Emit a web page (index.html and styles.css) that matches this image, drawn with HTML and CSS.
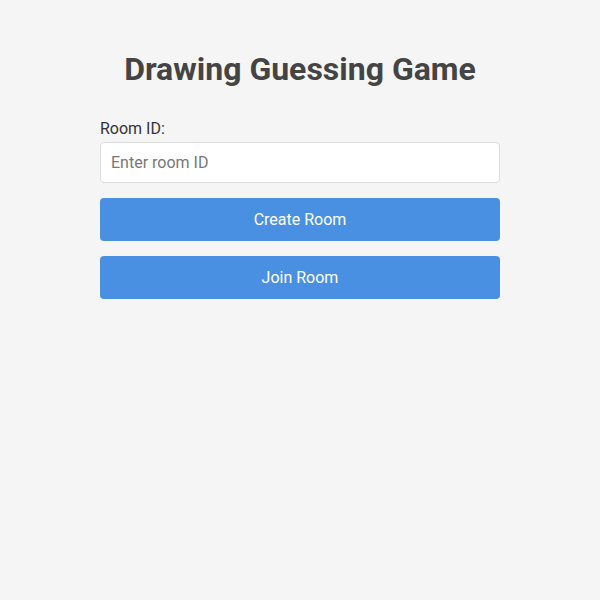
FILE: index.html
```html
<!DOCTYPE html>
<html lang="en">
<head>
    <meta charset="UTF-8">
    <meta name="viewport" content="width=device-width, initial-scale=1.0">
    <title>Drawing Guessing Game</title>
    <link rel="stylesheet" href="styles.css">
</head>
<body>
    <!-- Lobby screen -->
    <div class="container">
        <h1>Drawing Guessing Game</h1>
        <div class="lobby">
            <label for="roomId">Room ID:</label>
            <input type="text" id="roomId" placeholder="Enter room ID">
            <button id="createBtn">Create Room</button>
            <button id="joinBtn">Join Room</button>
        </div>
    </div>
</body>
</html>
```

FILE: styles.css
```css
/* Page layout */
body {
    font-family: Roboto, "Liberation Sans", Arial, sans-serif;
    margin: 0;
    padding: 30px 20px;
    background-color: #f5f5f5;
    color: #333;
}

/* Centered column */
.container {
    max-width: 400px;
    margin: 0 auto;
}

h1 {
    text-align: center;
    color: #444;
    font-size: 32px;
    margin: 20px 0 31px;
}

/* Lobby form */
.lobby {
    display: flex;
    flex-direction: column;
}

label {
    font-size: 16px;
    margin-bottom: 4px;
}

input {
    font-family: inherit;
    font-size: 16px;
    padding: 10px;
    border: 1px solid #ddd;
    border-radius: 4px;
    margin-bottom: 15px;
    color: #333;
}

input::placeholder {
    color: #777;
}

button {
    font-family: inherit;
    font-size: 16px;
    padding: 12px;
    border: none;
    border-radius: 4px;
    background-color: #4a90e2;
    color: white;
    cursor: pointer;
    margin-bottom: 15px;
}

button:hover {
    background-color: #357abd;
}
```
